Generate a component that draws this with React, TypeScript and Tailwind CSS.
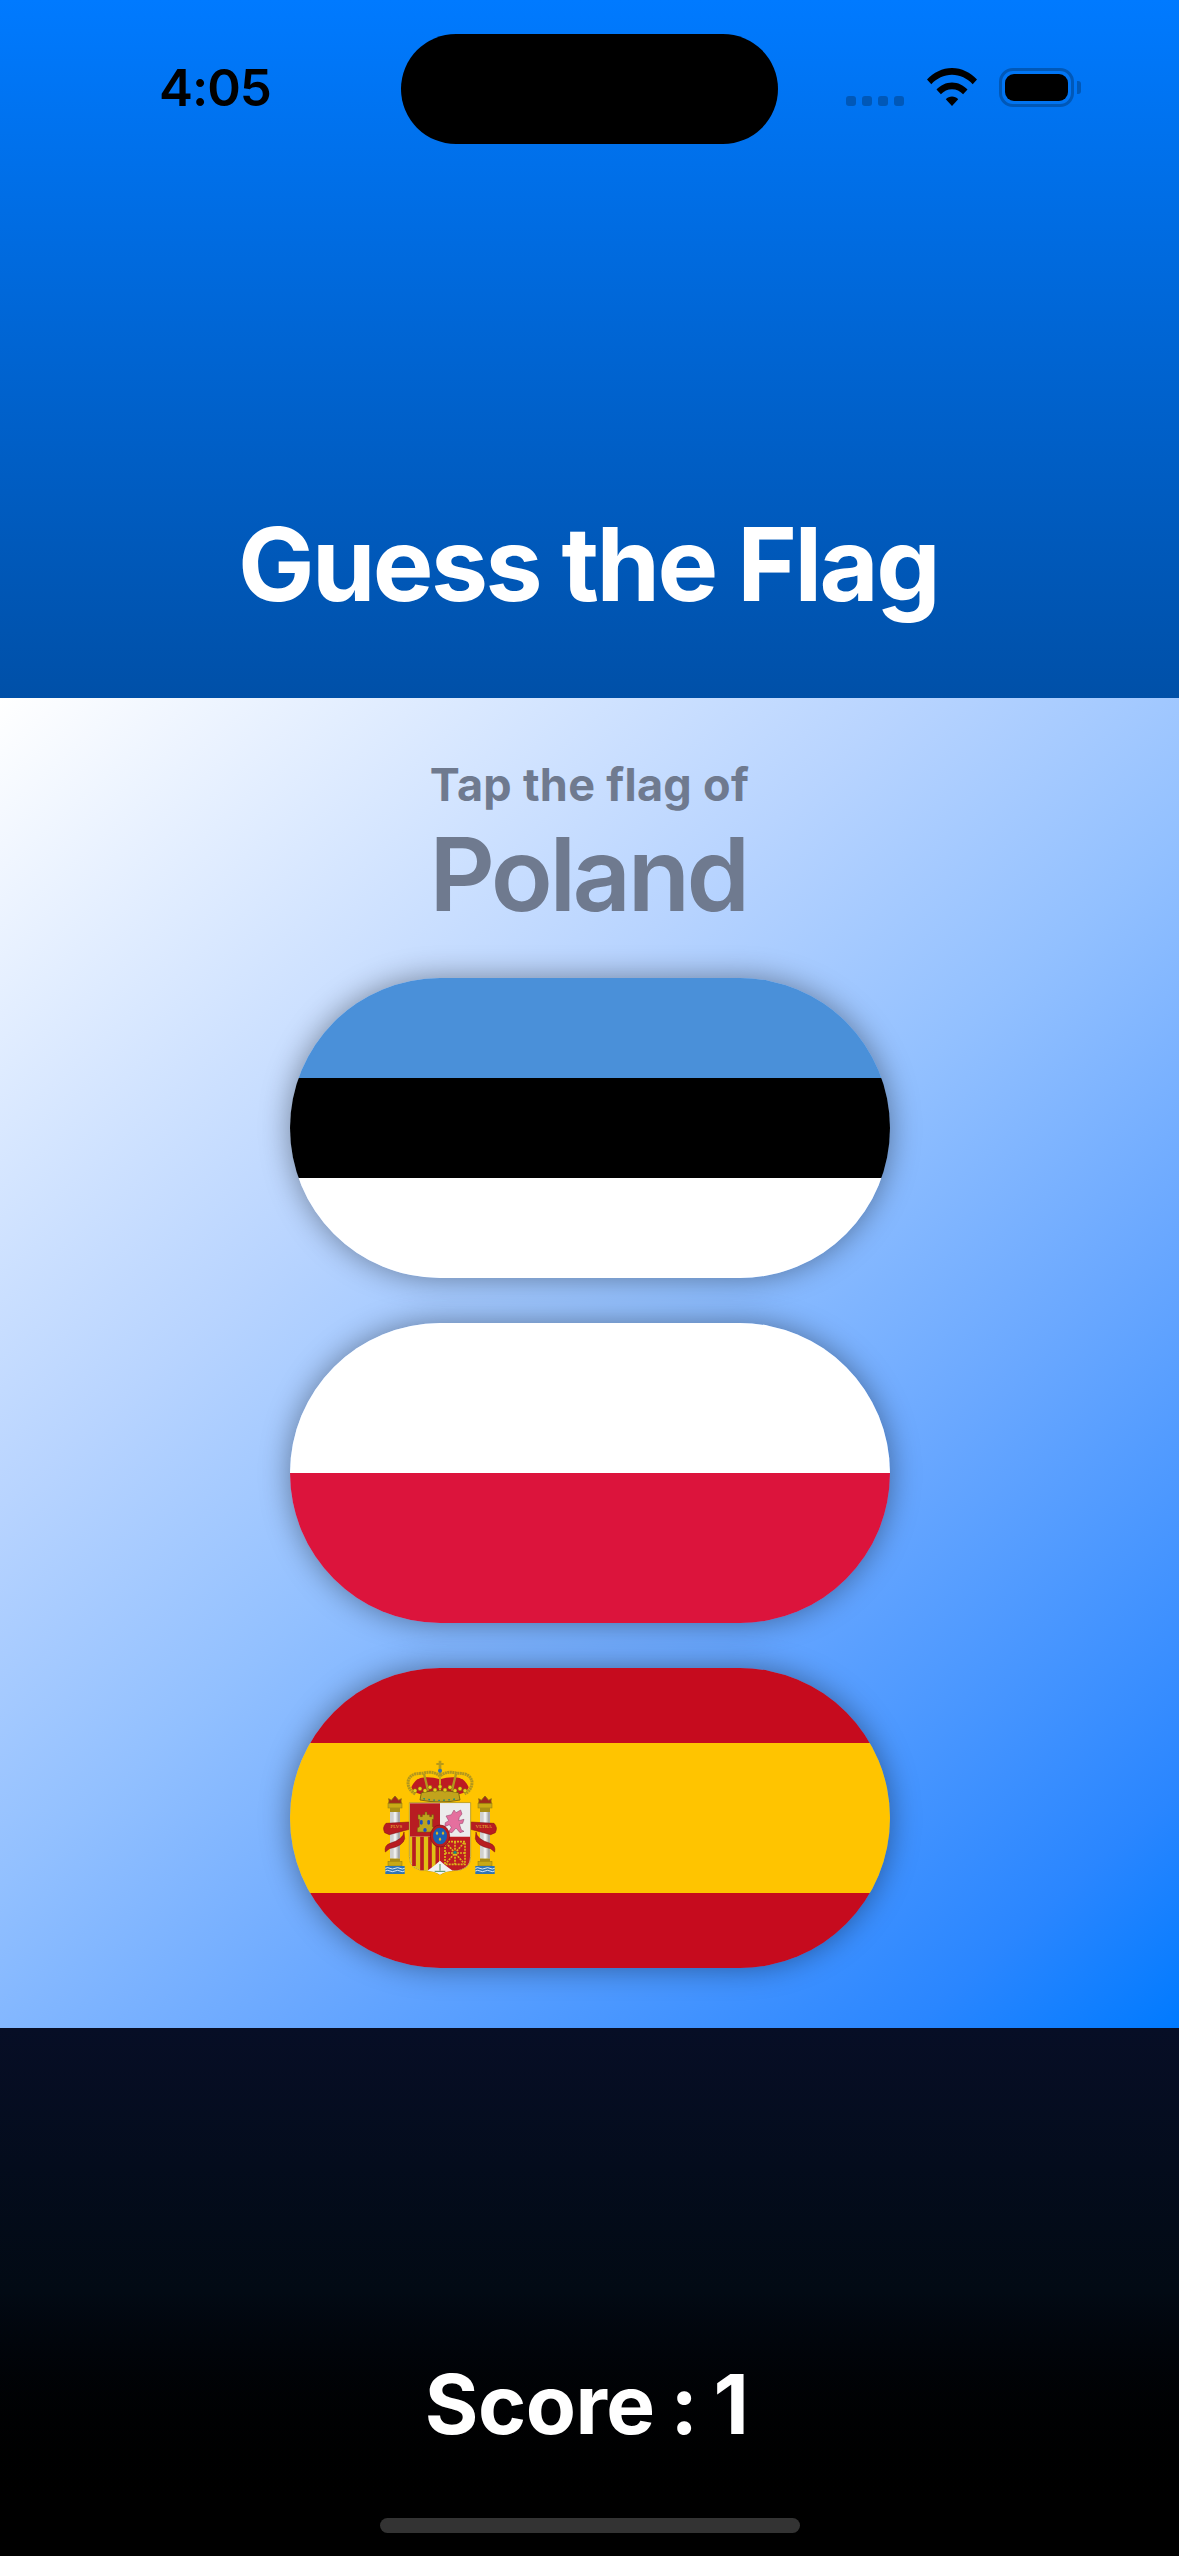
import React from "react";

const inter = "font-['Inter','Noto_Sans',sans-serif]";

function StatusIcons() {
  return (
    <div className="flex items-start">
      {/* signal dots */}
      <div className="flex gap-[6px] mt-[46px] mr-[23px]">
        <div className="w-[10px] h-[10px] rounded-[3px] bg-[#0058b8]" />
        <div className="w-[10px] h-[10px] rounded-[3px] bg-[#0058b8]" />
        <div className="w-[10px] h-[10px] rounded-[3px] bg-[#0058b8]" />
        <div className="w-[10px] h-[10px] rounded-[3px] bg-[#0058b8]" />
      </div>
      {/* wifi */}
      <svg width="50" height="38" viewBox="0 0 50 38" className="mt-[18px] mr-[22px]">
        <path d="M0 11.5C6.5 4.5 15.3 0 25 0s18.500 4.500 25 11.500l-4.300 4.700C40.300 10.400 33 6.800 25 6.800S9.700 10.400 4.300 16.200z" fill="#000" />
        <path d="M9.500 21.500C13.500 17.200 19 14.400 25 14.400s11.500 2.800 15.500 7.100l-4.400 4.700C33.200 23.100 29.300 21.200 25 21.200s-8.200 1.900-11.100 5z" fill="#000" />
        <path d="M18.800 31.300C20.400 29.500 22.600 28.500 25 28.500s4.600 1 6.200 2.800L25 38z" fill="#000" />
      </svg>
      {/* battery */}
      <div className="flex items-center mt-[18px]">
        <div className="w-[75px] h-[39px] rounded-[14px] border-[3px] border-[#0058b8] p-[3px]">
          <div className="w-full h-full rounded-[9px] bg-black" />
        </div>
        <div className="w-[4px] h-[13px] ml-[3px] rounded-r-[3px] bg-[#0058b8]" />
      </div>
    </div>
  );
}

function CoatOfArms() {
  const pillar = (cx: number) => (
    <g>
      <path d={`M${cx - 19} 190 q2 -8 0 -14 l8 5 l11 -13 l11 13 l8 -5 q-2 6 0 14z`} fill="#a3291a" stroke="#8a6d10" strokeWidth="2.500" />
      <rect x={cx - 21} y={191} width={42} height={13} fill="#c9a916" stroke="#8f7a10" strokeWidth="1.500" />
      <rect x={cx - 15} y={204} width={30} height={12} fill="#a98d14" />
      <rect x={cx - 15} y={216} width={30} height={140} fill="#d0d0d0" />
      <rect x={cx - 4} y={216} width={8} height={140} fill="#efefef" />
      <rect x={cx + 8} y={216} width={7} height={140} fill="#a8a8a8" />
      <rect x={cx - 15} y={356} width={30} height={8} fill="#a98d14" />
      <rect x={cx - 21} y={364} width={42} height={14} fill="#c9a916" stroke="#8f7a10" strokeWidth="1.500" />
      <rect x={cx - 29} y={378} width={58} height={24} fill="#2f74b5" />
      <path d={`M${cx - 29} 385 q7 -4 14 0 t15 0 t15 0 t14 0 M${cx - 29} 393 q7 -4 14 0 t15 0 t15 0 t14 0`} fill="none" stroke="#fff" strokeWidth="2.500" />
    </g>
  );

  return (
    <svg width="200" height="160" viewBox="0 0 600 480" className="absolute left-[50px] top-[72px]">
      {pillar(165)}
      {pillar(435)}

      {/* ribbons */}
      <path d="M208 246 L138 250 Q126 262 134 278 L148 284 L208 268z" fill="#b81c22" stroke="#7c1014" strokeWidth="1.500" />
      <path d="M392 246 L462 250 Q474 262 466 278 L452 284 L392 268z" fill="#b81c22" stroke="#7c1014" strokeWidth="1.500" />
      <path d="M192 276 Q190 298 150 310 Q132 316 136 336 L148 326 Q190 318 194 296z" fill="#b81c22" stroke="#7c1014" strokeWidth="1.500" />
      <path d="M408 276 Q410 298 450 310 Q468 316 464 336 L452 326 Q410 318 406 296z" fill="#b81c22" stroke="#7c1014" strokeWidth="1.500" />
      <text x="169" y="264" textAnchor="middle" fontFamily="Liberation Serif, serif" fontSize="15" fill="#e8c53a">PLVS</text>
      <text x="431" y="264" textAnchor="middle" fontFamily="Liberation Serif, serif" fontSize="15" fill="#e8c53a">VLTRA</text>

      {/* crown */}
      <path d="M214 142 Q228 108 262 112 Q282 112 300 118 Q318 112 338 112 Q372 108 386 142 Q380 158 360 162 H240 Q220 158 214 142z" fill="#bd1a22" />
      <path d="M300 62 V112" stroke="#b89a18" strokeWidth="8" />
      <path d="M289 72 H311" stroke="#b89a18" strokeWidth="6" />
      <circle cx="300" cy="92" r="6" fill="#2f74b5" />
      <path d="M226 162 Q204 150 204 126 Q208 98 250 100 Q276 90 300 108 Q324 90 350 100 Q392 98 396 126 Q396 150 374 162" fill="none" stroke="#b2961e" strokeWidth="9" strokeDasharray="6 1.500" />
      <path d="M252 102 Q258 125 264 152 M348 102 Q342 125 336 152" fill="none" stroke="#b2961e" strokeWidth="7" />
      <path d="M300 108 V160" stroke="#c9a916" strokeWidth="6" />
      <path d="M244 158 Q300 146 356 158 L360 180 Q300 192 240 180z" fill="#c2a31c" stroke="#6e5c10" strokeWidth="2.500" />
      <path d="M250 176 Q300 186 350 176" stroke="#1d8a7a" strokeWidth="4" strokeDasharray="5 10" fill="none" />
      {[225, 240, 255, 270, 285, 300, 315, 330, 345, 360, 375].map((x, i) => (
        <circle key={x} cx={x} cy={[152, 146, 152, 142, 150, 140, 150, 142, 152, 146, 152][i]} r="6" fill="#e6d21a" stroke="#7c6a10" strokeWidth="1.500" />
      ))}

      {/* shield */}
      <path d="M208 188 H392 V350 Q392 392 340 392 Q315 392 300 404 Q285 392 260 392 Q208 392 208 350z" fill="#e8e8e8" stroke="#b2961e" strokeWidth="2.500" />
      <rect x="210" y="190" width="90" height="100" fill="#b81c22" />
      <path d="M232 276 v-12 l6 -4 v-22 h-4 v-14 h7 v6 h6 v-6 h8 v-8 h6 v8 h8 v6 h6 v-6 h6 v14 h-4 v22 l6 4 v12z" fill="#bfa31c" stroke="#6e5c10" strokeWidth="1.500" />
      <rect x="240" y="240" width="8" height="14" rx="4" fill="#1d4fc0" />
      <rect x="262" y="240" width="8" height="14" rx="4" fill="#1d4fc0" />
      <rect x="250" y="264" width="10" height="12" rx="5" fill="#1d4fc0" />

      <rect x="300" y="190" width="90" height="100" fill="#ececec" />
      <path d="M318 228 l16 -4 l8 -14 l6 8 l14 -8 l4 12 l-8 10 l-2 10 l16 -4 l-4 12 l-10 2 l6 18 l8 4 l-12 4 l-12 -14 l-12 14 l-10 -2 l8 -14 l-6 -8 l-14 6 l2 -12 l10 -6z" fill="#e56f9e" stroke="#8a3a5e" strokeWidth="1.500" />

      <path d="M210 290 H300 V392 Q285 392 262 392 Q210 390 210 350z" fill="#e0c013" />
      <path d="M222 290 V378 M246 290 V391 M270 290 V392 M292 290 V392" stroke="#b81c22" strokeWidth="11" />

      <path d="M300 290 H390 V350 Q390 390 340 391 Q315 391 300 392z" fill="#c01c22" />
      <g fill="none" stroke="#dcb81a" strokeWidth="5">
        <rect x="315" y="305" width="60" height="68" strokeDasharray="6 3" />
        <path d="M345 305 V373 M315 339 H375 M318 308 L372 370 M372 308 L318 370" strokeDasharray="6 3" />
      </g>
      <circle cx="345" cy="337" r="5" fill="#1d8a7a" />

      <path d="M262 392 Q285 376 300 362 Q315 376 338 392 Q315 394 300 404 Q285 394 262 392z" fill="#f2f2f2" />
      <path d="M300 372 v20 M284 394 h32" stroke="#2b7a3a" strokeWidth="2.500" />

      {/* centre oval */}
      <ellipse cx="300" cy="288" rx="29" ry="33" fill="#b81c22" stroke="#7c1014" strokeWidth="2" />
      <ellipse cx="300" cy="288" rx="21" ry="25" fill="#1a5fb4" />
      <g fill="#e6b81a">
        <path d="M291 274 l4 6 l-4 6 l-4 -6z" />
        <path d="M309 274 l4 6 l-4 6 l-4 -6z" />
        <path d="M300 292 l4 6 l-4 6 l-4 -6z" />
      </g>
    </svg>
  );
}

function Flag({ children }: { children: React.ReactNode }) {
  return (
    <button className="block rounded-[150px] shadow-[0_0_30px_rgba(0,0,0,0.4)]">
      <div className="relative flex flex-col w-[600px] h-[300px] rounded-[150px] overflow-hidden">
        {children}
      </div>
    </button>
  );
}

export default function App() {
  return (
    <div className={`relative w-[1179px] h-[2556px] flex flex-col overflow-hidden ${inter}`}>
      {/* HEADER */}
      <header className="relative h-[698px] flex flex-col bg-gradient-to-b from-[#007aff] to-[#0050a8]">
        <div className="flex items-start justify-between pl-[159px] pr-[98px] pt-[50px]">
          <span className="mt-[7px] text-[51px] leading-[62px] font-semibold text-black tracking-[-1px]">4:05</span>
          <StatusIcons />
        </div>
        <div className="absolute left-[401px] top-[34px] w-[377px] h-[110px] rounded-[55px] bg-black" />
        <h1 className="mt-auto pb-[72px] pr-[3px] text-center text-[102px] leading-[124px] font-bold text-white tracking-[-2.6px]">
          Guess the Flag
        </h1>
      </header>

      {/* FLAGS */}
      <main className="h-[1330px] flex flex-col items-center pt-[60px] bg-[linear-gradient(138.4deg,#ffffff_0%,#b8d4ff_34%,#92c0ff_50%,#6aa8ff_66%,#2a86ff_90%,#007aff_100%)]">
        <p className="text-[45px] leading-[54px] font-bold text-[#6f7a8f] tracking-[0.3px]">Tap the flag of</p>
        <p className="pr-[3px] text-[102px] leading-[124px] font-semibold text-[#6f7a8f] tracking-[-3.5px]">Poland</p>
        <div className="flex flex-col gap-[45px] mt-[42px]">
          <Flag>
            <div className="h-[100px] bg-[#4a90d9]" />
            <div className="h-[100px] bg-black" />
            <div className="h-[100px] bg-white" />
          </Flag>
          <Flag>
            <div className="h-[150px] bg-white" />
            <div className="h-[150px] bg-[#dc143c]" />
          </Flag>
          <Flag>
            <div className="h-[75px] bg-[#c60b1e]" />
            <div className="h-[150px] bg-[#ffc400]" />
            <div className="h-[75px] bg-[#c60b1e]" />
            <CoatOfArms />
          </Flag>
        </div>
      </main>

      {/* SCORE */}
      <footer className="relative flex-1 flex flex-col items-center pt-[329px] bg-gradient-to-b from-[#070e26] via-[#020a14] via-50% to-black to-95%">
        <p className="pr-[6px] text-[82px] leading-[96px] font-bold text-white tracking-[-0.5px] [word-spacing:-3px]">Score : 1</p>
        <div className="absolute left-[380px] bottom-[23px] w-[420px] h-[15px] rounded-full bg-[#333333]" />
      </footer>
    </div>
  );
}
